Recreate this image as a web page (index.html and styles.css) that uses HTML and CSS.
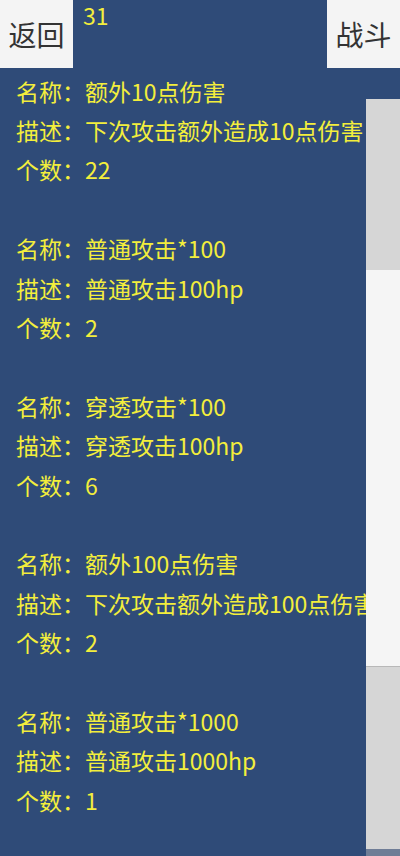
FILE: index.html
```html
<!DOCTYPE html>
<html lang="zh-CN">

<head>
    <meta charset="UTF-8">
    <meta name="viewport" content="width=device-width, initial-scale=1.0">
    <title>背包</title>

    <link rel="stylesheet" href="styles.css">
</head>

<body>

    <header class="top-bar">
        <button class="btn backBtn">返回</button>
        <span class="coin">31</span>
        <button class="btn fightBtn">战斗</button>
    </header>

    <main>
        <div class="list">
            <div class="item">
                <p>名称：额外10点伤害</p>
                <p>描述：下次攻击额外造成10点伤害</p>
                <p>个数：22</p>
            </div>
            <div class="item">
                <p>名称：普通攻击*100</p>
                <p>描述：普通攻击100hp</p>
                <p>个数：2</p>
            </div>
            <div class="item">
                <p>名称：穿透攻击*100</p>
                <p>描述：穿透攻击100hp</p>
                <p>个数：6</p>
            </div>
            <div class="item">
                <p>名称：额外100点伤害</p>
                <p>描述：下次攻击额外造成100点伤害</p>
                <p>个数：2</p>
            </div>
            <div class="item">
                <p>名称：普通攻击*1000</p>
                <p>描述：普通攻击1000hp</p>
                <p>个数：1</p>
            </div>
        </div>

        <div class="scrollbar">
            <div class="track"></div>
            <div class="handle"></div>
            <div class="track track-end"></div>
        </div>
    </main>

</body>

</html>
```

FILE: styles.css
```css
* {
    box-sizing: border-box;
    padding: 0;
    margin: 0;
}

body {
    background: #2f4b78;
    width: 400px;
    height: 856px;
    overflow: hidden;
    font-family: "Noto Sans CJK SC", "Noto Sans", sans-serif;
    color: #f3ee3c;
}

/* Top bar */
.top-bar {
    display: flex;
    align-items: flex-start;
    height: 68px;
}

.btn {
    width: 73px;
    height: 68px;
    border: none;
    background: #f4f4f4;
    color: #333333;
    font-family: "Noto Sans CJK SC", sans-serif;
    font-size: 28px;
    line-height: 68px;
    padding-bottom: 4px;
}

.coin {
    flex: 1;
    margin-left: 10px;
    font-size: 23px;
    line-height: 30px;
}

/* List */
main {
    display: flex;
    align-items: flex-start;
}

.list {
    width: 366px;
    overflow: hidden;
    padding-top: 3.5px;
    padding-left: 16px;
}

.item {
    margin-bottom: 39.4px;
}

.item p {
    font-size: 23px;
    line-height: 39.4px;
    white-space: nowrap;
}

/* Scrollbar */
.scrollbar {
    width: 34px;
    height: 757px;
    margin-top: 31px;
    display: flex;
    flex-direction: column;
    border-bottom: 7px solid #6f7d96;
}

.track {
    height: 171px;
    background: #d6d6d6;
}

.handle {
    height: 396px;
    background: #f5f5f5;
}

.track-end {
    flex: 1;
    border-top: 1px solid #b8b8b8;
}
```
